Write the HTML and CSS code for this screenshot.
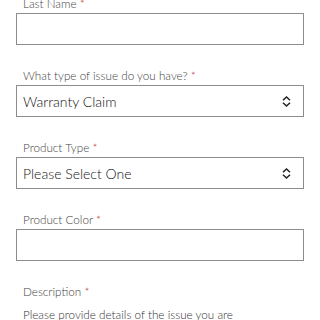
FILE: index.html
```html
<!DOCTYPE html>
<html>
<head>
<meta charset="utf-8">
<link rel="stylesheet" href="styles.css">
</head>
<body>
<form class="form">
  <div class="field">
    <label class="label">Last Name <span class="req">*</span></label>
    <div class="box"></div>
  </div>
  <div class="field">
    <label class="label">What type of issue do you have? <span class="req">*</span></label>
    <div class="box select"><span class="value">Warranty Claim</span>
      <svg class="chev" width="9" height="11" viewBox="0 0 9 11"><path d="M1 4.2 L4.5 1 L8 4.2 M1 6.8 L4.5 10 L8 6.8" fill="none" stroke="#222" stroke-width="1.5"/></svg>
    </div>
  </div>
  <div class="field">
    <label class="label">Product Type <span class="req">*</span></label>
    <div class="box select"><span class="value">Please Select One</span>
      <svg class="chev" width="9" height="11" viewBox="0 0 9 11"><path d="M1 4.2 L4.5 1 L8 4.2 M1 6.8 L4.5 10 L8 6.8" fill="none" stroke="#222" stroke-width="1.5"/></svg>
    </div>
  </div>
  <div class="field">
    <label class="label">Product Color <span class="req">*</span></label>
    <div class="box"></div>
  </div>
  <div class="field">
    <label class="label">Description <span class="req">*</span></label>
    <p class="help">Please provide details of the issue you are</p>
  </div>
</form>
</body>
</html>
```

FILE: styles.css
```css
html, body {
  margin: 0;
  padding: 0;
  background: #fff;
}
body {
  font-family: "Lato", "Noto Sans", sans-serif;
  overflow: hidden;
}
.form {
  margin-top: -5px;
  padding: 0 16px;
  display: flex;
  flex-direction: column;
  gap: 22px;
}
.field {
  display: flex;
  flex-direction: column;
  gap: 2px;
}
.label {
  display: block;
  padding-left: 7px;
  font-size: 11.7px;
  font-weight: 300;
  line-height: 16px;
  color: #444;
}
.req {
  color: #b33;
}
.box {
  box-sizing: border-box;
  height: 32px;
  border: 1px solid #8c8c8c;
  border-left-width: 1.5px;
  background: #fff;
}
.select {
  display: flex;
  align-items: center;
  justify-content: space-between;
  padding: 0 12px 0 6px;
}
.value {
  font-size: 14px;
  font-weight: 300;
  color: #111;
}
.chev {
  display: block;
}
.help {
  margin: 4px 0 0;
  padding-left: 7px;
  font-size: 11.7px;
  font-weight: 300;
  line-height: 18px;
  color: #333;
}
```
